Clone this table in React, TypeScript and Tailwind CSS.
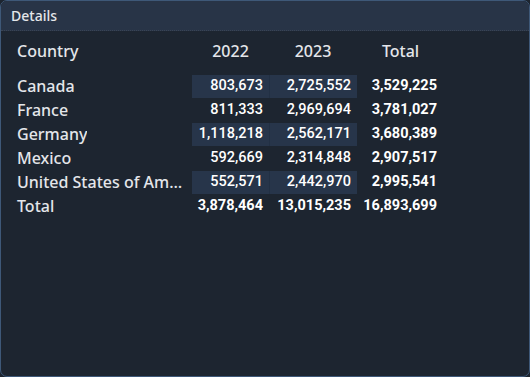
import React from "react";

const rows = [
  { c: "Canada", a: "803,673", b: "2,725,552", t: "3,529,225", hl: true },
  { c: "France", a: "811,333", b: "2,969,694", t: "3,781,027", hl: false },
  { c: "Germany", a: "1,118,218", b: "2,562,171", t: "3,680,389", hl: true },
  { c: "Mexico", a: "592,669", b: "2,314,848", t: "2,907,517", hl: false },
  { c: "United States of America", a: "552,571", b: "2,442,970", t: "2,995,541", hl: true },
];

const sans = { fontFamily: '"Noto Sans", "Open Sans", sans-serif' };
const num = { fontFamily: 'Roboto, "Liberation Sans", sans-serif' };

export default function App() {
  return (
    <div className="w-[530px] h-[377px] bg-[#1d2530] p-0">
      <div className="w-full h-full border border-[#3e5878] rounded-[7px] bg-[#1d2530] overflow-hidden flex flex-col">
        <div
          className="h-[30px] bg-[#283447] border-b border-dotted border-[#3a4454] flex items-center pl-[10px] text-[14px] font-medium text-[#e4e6ea]"
          style={sans}
        >
          Details
        </div>
        <div className="pl-[16px] pt-[8px]">
          <div className="grid grid-cols-[175px_77px_88px_87px] h-[24px] items-center text-[16px] font-medium text-[#e4e6ea]" style={sans}>
            <div>Country</div>
            <div className="text-center">2022</div>
            <div className="text-center">2023</div>
            <div className="text-center">Total</div>
          </div>
          <div className="h-[11px]" />
          {rows.map((r) => (
            <div key={r.c} className="grid grid-cols-[175px_77px_1px_87px_87px] h-[24px] items-stretch">
              <div className="text-[16px] font-medium text-[#e4e6ea] flex items-center pr-[7px]" style={sans}>
                <span className="truncate">{r.c}</span>
              </div>
              <div
                className={`flex items-center justify-end pr-[6px] text-[14.5px] font-medium text-white my-[0.5px] ${r.hl ? "bg-[#27354a]" : ""}`}
                style={num}
              >
                {r.a}
              </div>
              <div className={`my-[0.5px] ${r.hl ? "bg-[#223044]" : ""}`} />
              <div
                className={`flex items-center justify-end pr-[6px] text-[14.5px] font-medium text-white my-[0.5px] ${r.hl ? "bg-[#27354a]" : ""}`}
                style={num}
              >
                {r.b}
              </div>
              <div className="flex items-center justify-end pr-[7px] text-[14.5px] font-bold text-white" style={num}>
                {r.t}
              </div>
            </div>
          ))}
          <div className="grid grid-cols-[175px_77px_1px_87px_87px] h-[24px] items-stretch">
            <div className="text-[16px] font-medium text-[#e4e6ea] flex items-center" style={sans}>
              Total
            </div>
            <div className="flex items-center justify-end pr-[6px] text-[14.5px] font-bold text-white" style={num}>
              3,878,464
            </div>
            <div />
            <div className="flex items-center justify-end pr-[6px] text-[14.5px] font-bold text-white" style={num}>
              13,015,235
            </div>
            <div className="flex items-center justify-end pr-[7px] text-[14.5px] font-bold text-white" style={num}>
              16,893,699
            </div>
          </div>
        </div>
      </div>
    </div>
  );
}
